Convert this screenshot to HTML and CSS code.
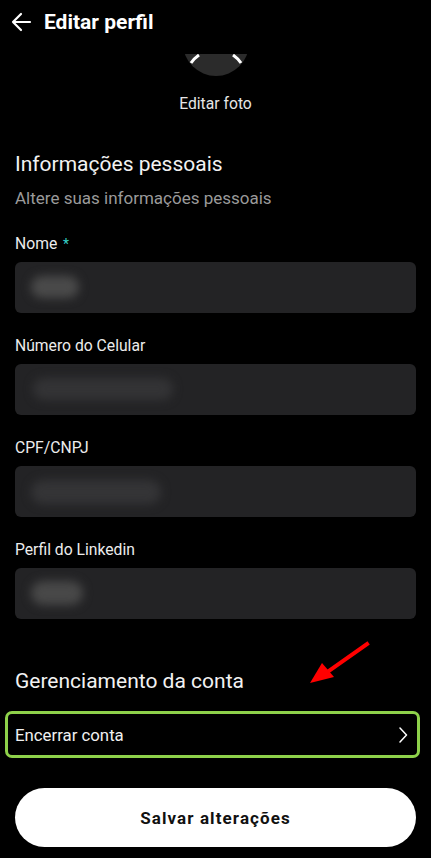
FILE: index.html
```html
<!DOCTYPE html>
<html lang="pt-BR">
<head>
<meta charset="utf-8">
<title>Editar perfil</title>
<link rel="stylesheet" href="styles.css">
</head>
<body>
<div class="screen">
  <header class="header">
    <svg class="back" width="22" height="22" viewBox="0 0 22 22" aria-hidden="true">
      <path d="M20 11H3M11 3L3 11L11 19" fill="none" stroke="#fff" stroke-width="2.2" stroke-linecap="round" stroke-linejoin="round"/>
    </svg>
    <h1 class="title">Editar perfil</h1>
  </header>

  <div class="avatar">
    <svg width="64" height="22" viewBox="0 0 64 22" aria-hidden="true">
      <circle cx="32" cy="-11" r="33" fill="#2b2b2b"/>
      <path d="M7 9 A30 30 0 0 1 15 1" fill="none" stroke="#fff" stroke-width="3"/>
      <path d="M49 1 A30 30 0 0 1 57 9" fill="none" stroke="#fff" stroke-width="3"/>
    </svg>
    <span class="avatar-label">Editar foto</span>
  </div>

  <main class="content">
    <h2 class="section-title">Informações pessoais</h2>
    <p class="section-sub">Altere suas informações pessoais</p>

    <div class="field">
      <label class="label">Nome <span class="req">*</span></label>
      <div class="input"><span class="blur b-nome"></span></div>
    </div>
    <div class="field">
      <label class="label">Número do Celular</label>
      <div class="input"><span class="blur b-cel"></span></div>
    </div>
    <div class="field">
      <label class="label">CPF/CNPJ</label>
      <div class="input"><span class="blur b-cpf"></span></div>
    </div>
    <div class="field">
      <label class="label">Perfil do Linkedin</label>
      <div class="input"><span class="blur b-lin"></span></div>
    </div>

    <h2 class="section-title account">Gerenciamento da conta</h2>
    <div class="row-close">
      <span>Encerrar conta</span>
      <svg width="10" height="16" viewBox="0 0 10 16" aria-hidden="true">
        <path d="M2 1L8.5 8L2 15" fill="none" stroke="#fff" stroke-width="1.5" stroke-linecap="round" stroke-linejoin="round"/>
      </svg>
    </div>

    <button class="save">Salvar alterações</button>
  </main>

  <svg class="annot-arrow" width="70" height="50" viewBox="0 0 70 50" aria-hidden="true">
    <path d="M63 3L22 32" stroke="#ff0000" stroke-width="4" stroke-linecap="square"/>
    <polygon points="6,42 18,22 30,36" fill="#ff0000"/>
  </svg>
</div>
</body>
</html>
```

FILE: styles.css
```css
* { box-sizing: border-box; }
html, body {
  margin: 0;
  padding: 0;
  background: #000;
}
body {
  font-family: Roboto, "Noto Sans", "Liberation Sans", sans-serif;
  color: #fff;
}
.screen {
  position: relative;
  width: 431px;
  height: 858px;
  overflow: hidden;
  background: #000;
}
.header {
  height: 43px;
  display: flex;
  align-items: center;
  gap: 12px;
  padding: 0 10px;
}
.back { display: block; flex: none; }
.title {
  margin: 0;
  font-size: 21px;
  font-weight: 700;
  line-height: 26px;
  color: #fff;
}
.avatar {
  display: flex;
  flex-direction: column;
  align-items: center;
  padding-top: 11px;
}
.avatar svg { display: block; margin-left: 1px; }
.avatar-label {
  margin-top: 17px;
  font-size: 15.7px;
  line-height: 22px;
  color: #e6e6e6;
}
.content {
  padding: 0 15px;
  display: flex;
  flex-direction: column;
}
.section-title {
  margin: 36px 0 0;
  font-size: 21px;
  font-weight: 400;
  line-height: 26px;
  color: #f2f2f2;
}
.section-sub {
  margin: 10px 0 0;
  font-size: 17px;
  line-height: 22px;
  color: #9a9a9a;
}
.field {
  display: flex;
  flex-direction: column;
  margin-top: 22px;
}
.field:first-of-type { margin-top: 24px; }
.label {
  font-size: 15.7px;
  line-height: 22px;
  color: #ececec;
}
.req { color: #36d1c9; margin-left: 2px; font-size: 14px; }
.input {
  position: relative;
  margin-top: 7px;
  height: 51px;
  background: #232325;
  border-radius: 6px;
  overflow: hidden;
}
.blur {
  position: absolute;
  border-radius: 12px;
  background: #3a3a3c;
  filter: blur(5px);
}
.b-nome { left: 16px; top: 14px; width: 48px; height: 22px; background: #4a4a4a; }
.b-cel { left: 18px; top: 14px; width: 140px; height: 22px; background: #333335; }
.b-cpf { left: 16px; top: 14px; width: 130px; height: 24px; background: #343436; }
.b-lin { left: 16px; top: 13px; width: 52px; height: 24px; background: #484848; }

.section-title.account { margin-top: 49px; }

.row-close {
  margin: 17px -4px 0 -10px;
  height: 47px;
  border: 3px solid #8ed14a;
  border-radius: 7px;
  display: flex;
  align-items: center;
  justify-content: space-between;
  padding: 0 9px 0 7px;
  font-size: 16.8px;
  color: #f0f0f0;
}
.row-close svg { display: block; }

.save {
  margin-top: 30px;
  height: 59px;
  border: none;
  border-radius: 30px;
  background: #fff;
  color: #111;
  font-family: Roboto, "Noto Sans", "Liberation Sans", sans-serif;
  font-size: 17px;
  font-weight: 700;
  letter-spacing: 1.1px;
}

.annot-arrow {
  position: absolute;
  left: 304px;
  top: 641px;
}
```
